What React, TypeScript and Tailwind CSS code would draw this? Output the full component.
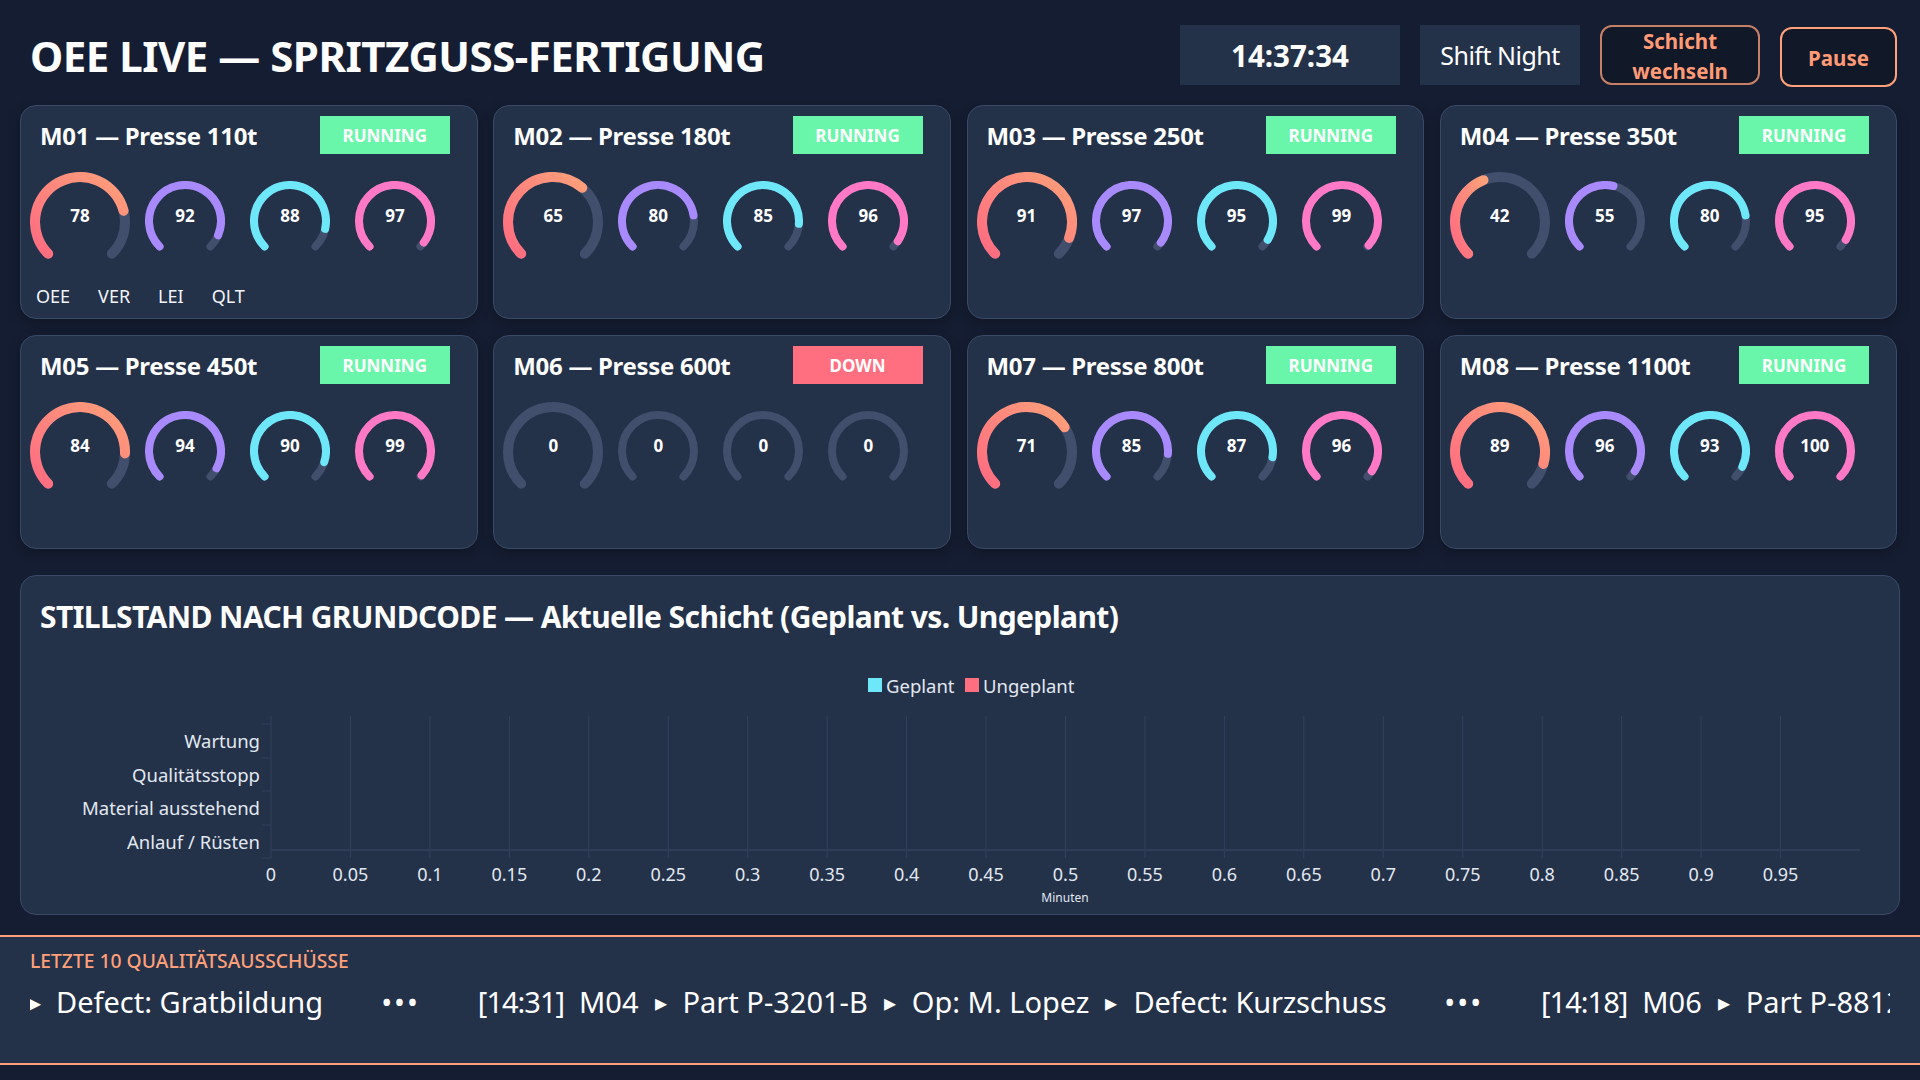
import { useId } from 'react'

type Machine = { name: string; status: 'RUNNING' | 'DOWN'; values: [number, number, number, number] }

const machines: Machine[] = [
  { name: 'M01 — Presse 110t', status: 'RUNNING', values: [78, 92, 88, 97] },
  { name: 'M02 — Presse 180t', status: 'RUNNING', values: [65, 80, 85, 96] },
  { name: 'M03 — Presse 250t', status: 'RUNNING', values: [91, 97, 95, 99] },
  { name: 'M04 — Presse 350t', status: 'RUNNING', values: [42, 55, 80, 95] },
  { name: 'M05 — Presse 450t', status: 'RUNNING', values: [84, 94, 90, 99] },
  { name: 'M06 — Presse 600t', status: 'DOWN', values: [0, 0, 0, 0] },
  { name: 'M07 — Presse 800t', status: 'RUNNING', values: [71, 85, 87, 96] },
  { name: 'M08 — Presse 1100t', status: 'RUNNING', values: [89, 96, 93, 100] },
]

const smallColors = ['#a98afc', '#6ee7f9', '#ff79c6']
const reasons = [
  ['Wartung', 742],
  ['Qualitätsstopp', 776],
  ['Material ausstehend', 809],
  ['Anlauf / Rüsten', 843],
] as const
const xTicks = ['0', '0.05', '0.1', '0.15', '0.2', '0.25', '0.3', '0.35', '0.4', '0.45', '0.5', '0.55', '0.6', '0.65', '0.7', '0.75', '0.8', '0.85', '0.9', '0.95']

// arc runs 270deg clockwise, starting bottom-left
function arcPath(cx: number, cy: number, r: number, pct: number) {
  const start = (135 * Math.PI) / 180
  const end = start + (pct / 100) * ((270 * Math.PI) / 180)
  const x1 = cx + r * Math.cos(start)
  const y1 = cy + r * Math.sin(start)
  const x2 = cx + r * Math.cos(end)
  const y2 = cy + r * Math.sin(end)
  return `M ${x1} ${y1} A ${r} ${r} 0 ${pct > 66.66 ? 1 : 0} 1 ${x2} ${y2}`
}

function Gauge({ value, big, color }: { value: number; big?: boolean; color?: string }) {
  const gradId = useId()
  const size = big ? 100 : 80
  const stroke = big ? 10 : 8
  const c = size / 2
  const r = c - stroke / 2
  return (
    <div className={big ? 'relative h-[90px] w-[100px] shrink-0' : 'relative mt-[9px] h-[72px] w-[80px] shrink-0'}>
      <svg width={size} height={size} className="block">
        {big && (
          <defs>
            <linearGradient id={gradId} x1="0" y1="1" x2="1" y2="0">
              <stop offset="0%" stopColor="#ff6b81" />
              <stop offset="100%" stopColor="#ffa07a" />
            </linearGradient>
          </defs>
        )}
        <path d={arcPath(c, c, r, 100)} fill="none" stroke="#414f6d" strokeWidth={stroke} strokeLinecap="round" />
        {value > 0 && (
          <path d={arcPath(c, c, r, value)} fill="none" stroke={big ? `url(#${gradId})` : color} strokeWidth={stroke} strokeLinecap="round" />
        )}
      </svg>
      <div className={big ? 'absolute inset-x-0 top-[32px] text-center text-[17px] leading-[24px] font-bold text-white' : 'absolute inset-x-0 top-[23px] text-center text-[17px] leading-[24px] font-bold text-white'}>
        {value}
      </div>
    </div>
  )
}

function MachineCard({ machine, showLabels, firstColumn }: { machine: Machine; showLabels?: boolean; firstColumn?: boolean }) {
  return (
    <div className={firstColumn ? 'h-[214px] -mr-[0.5px] rounded-2xl border border-[#3a4966] bg-[#233149] pt-[10px] pr-[27px] pl-[19px] shadow-[0_4px_12px_rgba(0,0,0,0.25)]' : 'h-[214px] rounded-2xl border border-[#3a4966] bg-[#233149] pt-[10px] pr-[27px] pl-[19px] shadow-[0_4px_12px_rgba(0,0,0,0.25)]'}>
      <div className="flex h-[38px] items-center justify-between">
        <h3 className="pt-[2px] text-[24px] leading-none font-bold tracking-[-0.3px] text-white">{machine.name}</h3>
        <span className={machine.status === 'DOWN' ? 'flex h-[38px] w-[130px] items-center justify-center bg-[#ff6f7f] pt-[1px] text-[17px] font-bold text-white' : 'flex h-[38px] w-[130px] items-center justify-center bg-[#69f6ab] pt-[1px] text-[17px] font-bold text-white'}>
          {machine.status}
        </span>
      </div>
      <div className="mt-[18px] -ml-[10px] flex items-start">
        <div className="mr-[15px]">
          <Gauge big value={machine.values[0]} />
        </div>
        {smallColors.map((color, i) => (
          <div key={color} className="mr-[25px]">
            <Gauge value={machine.values[i + 1]} color={color} />
          </div>
        ))}
      </div>
      {showLabels && (
        <div className="mt-[22px] -ml-[4px] flex gap-[28px] text-[18px] leading-[24px] text-[#f1f5f9]">
          <span>OEE</span>
          <span>VER</span>
          <span>LEI</span>
          <span>QLT</span>
        </div>
      )}
    </div>
  )
}

function DowntimeChart() {
  // viewBox uses page coordinates so ticks line up with the measured grid
  return (
    <svg viewBox="21 660 1878 254" className="mt-[23px] block h-[254px] w-[1878px] text-[#e2e8f0]" fontSize="18" fill="currentColor">
      <rect x="868" y="678" width="14" height="14" fill="#6ee7f9" />
      <text x="886" y="693" fontSize="18.5">Geplant</text>
      <rect x="965" y="678" width="14" height="14" fill="#ff6f7f" />
      <text x="983" y="693" fontSize="18.5">Ungeplant</text>
      {xTicks.map((t, i) => {
        const x = 271 + i * 79.45
        return (
          <g key={t}>
            <line x1={x} x2={x} y1="716" y2="858" stroke="#33415c" />
            <text x={x} y="881" textAnchor="middle">{t}</text>
          </g>
        )
      })}
      {[724, 758, 791, 825, 858].map((y) => (
        <line key={y} x1="262" x2="271" y1={y} y2={y} stroke="#33415c" />
      ))}
      <line x1="271" x2="1860" y1="850" y2="850" stroke="#2f3d57" strokeWidth="2" />
      {reasons.map(([label, y]) => (
        <text key={label} x="260" y={y + 6} textAnchor="end" fontSize="18.5">{label}</text>
      ))}
      <text x="1065" y="902" textAnchor="middle" fontSize="12">Minuten</text>
    </svg>
  )
}

function Arrow({ gap = 'mx-[17px]' }: { gap?: string }) {
  return <span className={`${gap} flex w-[10px] items-center justify-center text-[24px] leading-none`}>▸</span>
}

function Dots() {
  return <span className="mx-[58px] tracking-[2px]">•••</span>
}

function Stamp({ children }: { children: string }) {
  return <span className="mr-[15px] tracking-[-1px]">{children}</span>
}

export default function App() {
  return (
    <div className="h-[1080px] w-[1920px] overflow-hidden bg-[#151d32] font-['Noto_Sans',sans-serif] text-white">
      <header className="flex h-[105px] items-center pt-[5px] pr-[23px] pl-[30px]">
        <h1 className="mt-[2px] mr-auto text-[42px] leading-none font-bold tracking-[-0.5px]">OEE LIVE — SPRITZGUSS-FERTIGUNG</h1>
        <div className="flex h-[60px] w-[220px] items-center justify-center bg-[#233149] pt-[2px] text-[29.5px] font-bold">14:37:34</div>
        <div className="ml-[20px] flex h-[60px] w-[160px] items-center justify-center bg-[#233149] pt-[2px] text-[25px] tracking-[-0.5px]">Shift Night</div>
        <button className="ml-[20px] h-[60px] w-[160px] rounded-xl border-2 border-[#c77f66] bg-[#111827] text-[20.5px] leading-[30px] font-bold text-[#ff9a76]">
          <span className="-mt-[1px] block">Schicht wechseln</span>
        </button>
        <button className="mt-1 ml-[20px] h-[60px] w-[117px] rounded-xl border-2 border-[#ffa07a] bg-[#111827] pt-[2px] text-[20.5px] font-bold text-[#ff9a76]">
          Pause
        </button>
      </header>

      <div className="ml-[20px] grid w-[1877px] grid-cols-4 gap-4">
        {machines.map((m, i) => (
          <MachineCard key={m.name} machine={m} showLabels={i === 0} firstColumn={i % 4 === 0} />
        ))}
      </div>

      <section className="mt-[26px] ml-[20px] h-[340px] w-[1880px] rounded-2xl border border-[#3a4966] bg-[#233149] pt-[21px] pl-[19px]">
        <h2 className="text-[30px] leading-[40px] font-bold tracking-[-0.6px]">STILLSTAND NACH GRUNDCODE — Aktuelle Schicht (Geplant vs. Ungeplant)</h2>
        <div className="-ml-[19px]">
          <DowntimeChart />
        </div>
      </section>

      <footer className="mt-[20px] h-[130px] border-y-2 border-[#ffa07a] bg-[#233149] px-[30px] pt-[11px]">
        <div className="text-[19.3px] leading-[26px] font-medium text-[#ffa07a]">LETZTE 10 QUALITÄTSAUSSCHÜSSE</div>
        <div className="mt-[8px] flex items-center overflow-hidden text-[29px] leading-[40px] whitespace-nowrap">
          <Arrow gap="mr-[16px]" />
          <span>Defect: Gratbildung</span>
          <Dots />
          <Stamp>[14:31]</Stamp>
          <span>M04</span>
          <Arrow />
          <span>Part P-3201-B</span>
          <Arrow />
          <span>Op: M. Lopez</span>
          <Arrow />
          <span className="tracking-[-0.2px]">Defect: Kurzschuss</span>
          <Dots />
          <Stamp>[14:18]</Stamp>
          <span>M06</span>
          <Arrow />
          <span>Part P-8812-C</span>
        </div>
      </footer>
    </div>
  )
}
